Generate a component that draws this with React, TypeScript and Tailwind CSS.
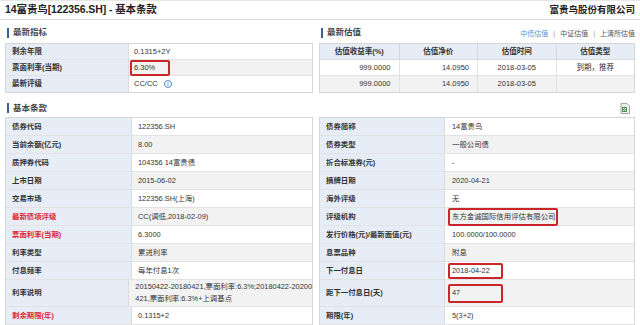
import type { ReactNode } from "react";

type Term = {
  label: string;
  value: ReactNode;
  isRed?: boolean;
};

type TermRow = {
  left: Term;
  right: Term;
  isTall?: boolean;
};

const RedBox = ({ children, className }: { children: ReactNode; className: string }) => (
  <span className={`inline-flex items-center border-2 border-[#c9252b] rounded-[2px] -ml-[4px] pl-[2px] ${className}`}>
    {children}
  </span>
);

const TERM_ROWS: TermRow[] = [
  { left: { label: "债券代码", value: "122356.SH" }, right: { label: "债券简称", value: "14富贵鸟" } },
  { left: { label: "当前余额(亿元)", value: "8.00" }, right: { label: "债券类型", value: "一般公司债" } },
  { left: { label: "质押券代码", value: "104356 14富贵债" }, right: { label: "折合标准券(元)", value: "-" } },
  { left: { label: "上市日期", value: "2015-06-02" }, right: { label: "摘牌日期", value: "2020-04-21" } },
  { left: { label: "交易市场", value: "122356.SH(上海)" }, right: { label: "海外评级", value: "无" } },
  {
    left: { label: "最新债项评级", value: "CC(调低,2018-02-09)", isRed: true },
    right: {
      label: "评级机构",
      value: <RedBox className="h-[18px] w-[110px]">东方金诚国际信用评估有限公司</RedBox>,
    },
  },
  {
    left: { label: "票面利率(当期)", value: "6.3000", isRed: true },
    right: { label: "发行价格(元)/最新面值(元)", value: "100.0000/100.0000" },
  },
  { left: { label: "利率类型", value: "累进利率" }, right: { label: "息票品种", value: "附息" } },
  {
    left: { label: "付息频率", value: "每年付息1次" },
    right: { label: "下一付息日", value: <RedBox className="h-[16px] w-[55px]">2018-04-22</RedBox> },
  },
  {
    left: {
      label: "利率说明",
      value: (
        <span className="whitespace-nowrap leading-[12px]">
          20150422-20180421,票面利率:6.3%;20180422-20200
          <br />
          421,票面利率:6.3%+上调基点
        </span>
      ),
    },
    right: { label: "距下一付息日(天)", value: <RedBox className="h-[19px] w-[55px]">47</RedBox> },
    isTall: true,
  },
  {
    left: { label: "剩余期限(年)", value: "0.1315+2", isRed: true },
    right: { label: "期限(年)", value: "5(3+2)" },
  },
];

const SectionTitle = ({ title }: { title: string }) => (
  <div className="flex items-center gap-[4px]">
    <span className="w-[2px] h-[10px] bg-[#3d5f94]" />
    <span className="text-[8.5px] font-bold text-[#444]">{title}</span>
  </div>
);

const ExportIcon = () => (
  <svg width="10" height="11" viewBox="0 0 10 11">
    <path d="M1 0.5h6l2.5 2.5v7.5h-8.5z" fill="#eef2ee" stroke="#8a9a8a" strokeWidth="0.8" />
    <rect x="2" y="4" width="5" height="5" fill="#4f8f5a" />
    <path d="M3 5l3 3M6 5l-3 3" stroke="#fff" strokeWidth="0.9" />
  </svg>
);

const InfoIcon = () => (
  <span className="inline-flex items-center justify-center w-[8px] h-[8px] rounded-full border border-[#4f86c6] text-[#4f86c6] text-[6px] font-bold leading-none">
    i
  </span>
);

const App = () => {
  return (
    <div className="w-[640px] h-[325px] overflow-hidden bg-white text-[#333] font-['Liberation_Sans','Noto_Sans_CJK_SC',sans-serif] border-t border-[#e6e6e6]">
      <header className="h-[19px] flex items-center justify-between px-[5px] border-b border-[#dcdcdc]">
        <h1 className="text-[10.5px] font-bold text-[#222] tracking-[-0.1px]">14富贵鸟[122356.SH] - 基本条款</h1>
        <span className="text-[9.5px] font-bold text-[#222]">富贵鸟股份有限公司</span>
      </header>

      <div className="flex gap-[6px] px-[5px]">
        <section className="w-[308px]">
          <div className="h-[23px] flex items-end pb-[4px] pl-[2px]">
            <SectionTitle title="最新指标" />
          </div>
          <div className="border border-[#d6d6d6] text-[7.5px]">
            <div className="flex h-[16px] border-b border-[#e2e2e2]">
              <div className="w-[122px] bg-[#e7edf6] font-bold flex items-center pl-[6px]">剩余年限</div>
              <div className="flex-1 flex items-center pl-[5px] border-l border-[#dcdcdc]">0.1315+2Y</div>
            </div>
            <div className="flex h-[16px] border-b border-[#e2e2e2]">
              <div className="w-[122px] bg-[#e7edf6] font-bold flex items-center pl-[6px]">票面利率(当期)</div>
              <div className="flex-1 flex items-center pl-[5px] bg-[#f2f2f2] border-l border-[#dcdcdc]">
                <RedBox className="h-[16px] w-[40px]">6.30%</RedBox>
              </div>
            </div>
            <div className="flex h-[16px]">
              <div className="w-[122px] bg-[#e7edf6] font-bold flex items-center pl-[6px]">最新评级</div>
              <div className="flex-1 flex items-center gap-[6px] pl-[5px] border-l border-[#dcdcdc]">
                CC/CC <InfoIcon />
              </div>
            </div>
          </div>
        </section>

        <section className="flex-1">
          <div className="h-[23px] flex items-end justify-between pb-[4px] pl-[2px]">
            <SectionTitle title="最新估值" />
            <div className="flex items-center gap-[5px] text-[7px] text-[#555]">
              <span className="text-[#5b93d3]">中债估值</span>
              <span className="text-[#999]">|</span>
              <span>中证估值</span>
              <span className="text-[#999]">|</span>
              <span>上清所估值</span>
            </div>
          </div>
          <div className="border border-[#d6d6d6] text-[7.5px]">
            <div className="grid grid-cols-4 h-[16px] bg-[#e7edf6] font-bold border-b border-[#dcdcdc]">
              <div className="flex items-center justify-center">估值收益率(%)</div>
              <div className="flex items-center justify-center border-l border-[#d0d8e4]">估值净价</div>
              <div className="flex items-center justify-center border-l border-[#d0d8e4]">估值时间</div>
              <div className="flex items-center justify-center border-l border-[#d0d8e4]">估值类型</div>
            </div>
            <div className="grid grid-cols-4 h-[16px] border-b border-[#e2e2e2]">
              <div className="flex items-center justify-end pr-[8px]">999.0000</div>
              <div className="flex items-center justify-end pr-[8px] border-l border-[#e2e2e2]">14.0950</div>
              <div className="flex items-center justify-center border-l border-[#e2e2e2]">2018-03-05</div>
              <div className="flex items-center justify-center border-l border-[#e2e2e2]">到期，推荐</div>
            </div>
            <div className="grid grid-cols-4 h-[16px] bg-[#f2f2f2]">
              <div className="flex items-center justify-end pr-[8px]">999.0000</div>
              <div className="flex items-center justify-end pr-[8px] border-l border-[#e2e2e2]">14.0950</div>
              <div className="flex items-center justify-center border-l border-[#e2e2e2]">2018-03-05</div>
              <div className="border-l border-[#e2e2e2]" />
            </div>
          </div>
        </section>
      </div>

      <div className="h-[24px] flex items-center justify-between pl-[7px] pr-[10px] pt-[6px]">
        <SectionTitle title="基本条款" />
        <ExportIcon />
      </div>

      <div className="flex gap-[6px] px-[5px] text-[7.4px]">
        <div className="w-[308px] border border-[#d6d6d6]">
          {TERM_ROWS.map((row, index) => (
            <div
              key={row.left.label}
              className={`flex border-b border-[#e2e2e2] ${row.isTall ? "h-[27px]" : "h-[18px]"}`}
            >
              <div
                className={`w-[125px] bg-[#e7edf6] font-bold flex items-center pl-[6px] ${row.left.isRed ? "text-[#e0262e]" : "text-[#333]"}`}
              >
                {row.left.label}
              </div>
              <div
                className={`flex-1 flex items-center pl-[6px] border-l border-[#dcdcdc] ${index % 2 === 1 ? "bg-[#f2f2f2]" : "bg-white"}`}
              >
                {row.left.value}
              </div>
            </div>
          ))}
        </div>
        <div className="flex-1 border border-[#d6d6d6]">
          {TERM_ROWS.map((row, index) => (
            <div
              key={row.right.label}
              className={`flex border-b border-[#e2e2e2] ${row.isTall ? "h-[27px]" : "h-[18px]"}`}
            >
              <div className="w-[124px] bg-[#e7edf6] font-bold flex items-center pl-[6px] text-[#333]">
                {row.right.label}
              </div>
              <div
                className={`flex-1 flex items-center pl-[7px] border-l border-[#dcdcdc] ${index % 2 === 1 ? "bg-[#f2f2f2]" : "bg-white"}`}
              >
                {row.right.value}
              </div>
            </div>
          ))}
        </div>
      </div>
    </div>
  );
};

export default App;
